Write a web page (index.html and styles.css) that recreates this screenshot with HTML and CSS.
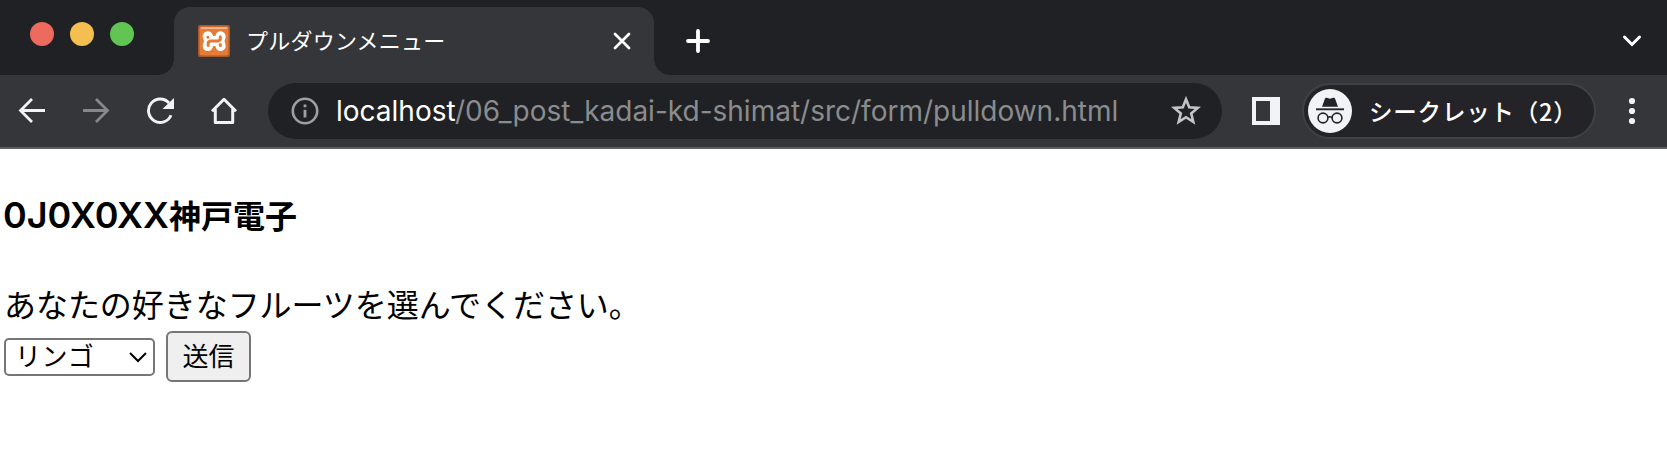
FILE: index.html
```html
<!DOCTYPE html>
<html lang="ja">
<head>
<meta charset="utf-8">
<title>プルダウンメニュー</title>
<link rel="stylesheet" href="styles.css">
</head>
<body>
<header class="browser">
  <div class="tabstrip">
    <div class="lights"><i class="light red"></i><i class="light yellow"></i><i class="light green"></i></div>
    <div class="tab">
      <svg class="favicon" width="32" height="32" viewBox="0 0 32 32">
        <defs><linearGradient id="g" x1="0" y1="0" x2="0" y2="1"><stop offset="0" stop-color="#fff" stop-opacity=".25"/><stop offset="1" stop-color="#fff" stop-opacity=".65"/></linearGradient></defs>
        <rect width="32" height="32" rx="2" fill="#a9592a"/>
        <rect x="1.500" y="1.500" width="29" height="29" rx="2" fill="#e67b35"/>
        <path d="M2 2H30L28.500 3.700H3.500Z" fill="url(#g)"/>
        <g fill="none" stroke-linecap="round" stroke-linejoin="round">
          <path d="M9.800 11.300L11.300 16L9.800 21M22.600 11.300L21.300 16L22.600 21M11.300 16H21.300" stroke="#fff" stroke-width="10.200"/>
          <path d="M9.800 12.200H9.900M22.300 11.700V14.500L20.500 16H12L10.200 17.500V20.500M22.300 19.500V20.500" stroke="#e67b35" stroke-width="3"/>
        </g>
      </svg>
      <span class="tab-title">プルダウンメニュー</span>
      <svg class="close" width="18" height="18" viewBox="0 0 18 18"><path d="M2 2L16 16M16 2L2 16" stroke="#fff" stroke-width="2.800" stroke-linecap="round"/></svg>
    </div>
    <svg class="newtab" width="24" height="24" viewBox="0 0 24 24"><path d="M12 2V22M2 12H22" stroke="#fff" stroke-width="3.800" stroke-linecap="round"/></svg>
    <svg class="chevron" width="20" height="14" viewBox="0 0 20 14"><path d="M2.500 3L10 10.500L17.500 3" fill="none" stroke="#fff" stroke-width="3" stroke-linecap="round"/></svg>
  </div>
  <div class="toolbar">
    <div class="nav">
      <svg width="28" height="28" viewBox="0 0 28 28"><path d="M27 13.500H3M14 2L2.500 13.500L14 25" fill="none" stroke="#f1f3f4" stroke-width="2.800"/></svg>
      <svg width="28" height="28" viewBox="0 0 28 28"><path d="M1 13.500H25M14 2L25.500 13.500L14 25" fill="none" stroke="#87888a" stroke-width="2.800"/></svg>
      <svg width="28" height="28" viewBox="0 0 28 28"><path d="M23 6A11.700 11.700 0 1 0 25 18.200" fill="none" stroke="#f1f3f4" stroke-width="2.900"/><path d="M28 1V12H16.500Z" fill="#f1f3f4"/></svg>
      <svg width="28" height="28" viewBox="0 0 28 28"><path d="M2 14.300L14 2.300L26 14.300M5.300 12V25.500H22.700V12" fill="none" stroke="#f1f3f4" stroke-width="3" stroke-linejoin="round"/></svg>
    </div>
    <div class="omnibox">
      <svg width="28" height="28" viewBox="0 0 28 28"><circle cx="14" cy="14" r="12.200" fill="none" stroke="#9aa0a6" stroke-width="2.600"/><path d="M14 7.500V10.200M14 12.700V20.500" stroke="#9aa0a6" stroke-width="2.800"/></svg>
      <div class="url"><span class="host">localhost</span><span class="path">/06_post_kadai-kd-shimat/src/form/pulldown.html</span></div>
      <svg class="star" width="30" height="30" viewBox="0 0 30 30"><path d="M15 3.300L18.200 11.300L26.700 11.900L20.200 17.400L22.300 25.800L15 21.200L7.700 25.800L9.800 17.400L3.300 11.900L11.800 11.300Z" fill="none" stroke="#c4c4c5" stroke-width="2.600"/></svg>
    </div>
    <svg class="panel" width="28" height="28" viewBox="0 0 28 28"><path fill-rule="evenodd" d="M0 0H28V28H0ZM4 4V24H18V4Z" fill="#f1f3f4"/></svg>
    <div class="incognito">
      <svg width="44" height="44" viewBox="0 0 44 44"><circle cx="22" cy="22" r="22" fill="#f1f3f4"/><path d="M14 17.700L17 9.500Q17.500 8.500 18.700 8.800L22 9.700L25.300 8.800Q26.500 8.500 27 9.500L30 17.700Z" fill="#242428"/><path d="M8 20.300H36" stroke="#242428" stroke-width="1.900"/><g fill="none" stroke="#242428" stroke-width="1.600"><circle cx="15" cy="29" r="4.900"/><circle cx="29" cy="29" r="4.900"/><path d="M19.800 28.600Q22 27 24.200 28.600"/></g></svg>
      <span class="incognito-text">シークレット（2）</span>
    </div>
    <svg class="menu" width="8" height="28" viewBox="0 0 8 28"><g fill="#f1f3f4"><circle cx="4" cy="4" r="3.100"/><circle cx="4" cy="14" r="3.100"/><circle cx="4" cy="24" r="3.100"/></g></svg>
  </div>
</header>
<main class="page">
  <h1 class="heading"><span class="code">0J0X0XX</span>神戸電子</h1>
  <p class="question">あなたの好きなフルーツを選んでください。</p>
  <form class="form">
    <div class="select"><span class="value">リンゴ</span><svg width="20" height="14" viewBox="0 0 20 14"><path d="M2 3L10 11L18 3" fill="none" stroke="#000" stroke-width="2"/></svg></div>
    <button class="submit" type="button">送信</button>
  </form>
</main>
</body>
</html>
```
FILE: styles.css
```css
* { box-sizing: border-box; }
body { margin: 0; background: #fff; color: #000; font-family: Inter, "Noto Sans CJK JP", sans-serif; }
svg { display: block; flex: none; }
.tabstrip { height: 75px; padding-top: 7px; background: #202124; display: flex; align-items: flex-start; }
.lights { display: flex; gap: 16px; padding: 15px 0 0 30px; width: 174px; }
.light { width: 24px; height: 24px; border-radius: 50%; }
.red { background: #ed6a5e; }
.yellow { background: #f5bf4f; }
.green { background: #61c554; }
.tab { position: relative; width: 480px; height: 68px; padding: 0 23px 0 24px; display: flex; align-items: center; background: #35363a; border-radius: 16px 16px 0 0; }
.tab::before, .tab::after { content: ""; position: absolute; bottom: 0; width: 16px; height: 16px; }
.tab::before { left: -16px; background: radial-gradient(circle at 0 0, transparent 15.5px, #35363a 16px); }
.tab::after { right: -16px; background: radial-gradient(circle at 100% 0, transparent 15.5px, #35363a 16px); }
.tab-title { margin-left: 16px; padding-bottom: 4px; font: 22px/32px "Noto Sans CJK JP", sans-serif; letter-spacing: 0.25px; color: #fff; white-space: nowrap; }
.close { margin-left: auto; }
.newtab { margin: 22px 0 0 32px; }
.chevron { margin: 27px 25px 0 auto; }
.toolbar { height: 74px; padding: 8px 31px 8px 18px; display: flex; align-items: flex-start; background: #35363a; border-bottom: 2px solid #5f6064; }
.nav { display: flex; gap: 36px; padding: 14px 0 0 0; }
.omnibox { width: 954px; height: 56px; margin-left: 30px; padding: 0 21px 0 23px; border-radius: 28px; display: flex; align-items: center; background: #202124; }
.url { display: flex; margin-left: 17px; font-size: 28px; line-height: 40px; white-space: nowrap; }
.host { width: 119px; color: #fff; }
.path { color: #8b8c8e; }
.star { margin-left: auto; }
.panel { margin: 14px 0 0 30px; }
.incognito { width: 294px; height: 56px; margin-left: 22px; padding-left: 4px; display: flex; align-items: center; border: 2px solid #404146; border-radius: 28px; background: #242428; }
.incognito-text { margin-left: 17px; padding-bottom: 1px; font: 500 23.500px/34px "Noto Sans CJK JP", sans-serif; letter-spacing: 0.8px; color: #fff; white-space: nowrap; }
.menu { margin: 14px 0 0 auto; }
.page { padding: 44px 4px 0; }
.heading { margin: 0; font-size: 32px; line-height: 48px; font-weight: 700; white-space: nowrap; }
.code { margin-left: -1px; font-size: 36px; font-weight: 600; line-height: 40px; }
.question { margin: 38px 0 0; font: 32px/48px "Noto Sans CJK JP", sans-serif; letter-spacing: -0.05px; }
.form { margin-top: 4px; display: flex; align-items: flex-start; gap: 11px; }
.select { width: 151px; height: 38px; margin-top: 7px; padding: 0 5px 0 9px; display: flex; align-items: center; justify-content: space-between; border: 2px solid #767676; border-radius: 5px; font: 26px/34px "Noto Sans CJK JP", sans-serif; }
.value { padding-bottom: 5px; letter-spacing: 0.4px; }
.submit { width: 85px; height: 51px; padding: 0 0 4px; border: 2px solid #767676; border-radius: 6px; background: #efefef; color: #000; font: 26px/38px "Noto Sans CJK JP", sans-serif; }
```
